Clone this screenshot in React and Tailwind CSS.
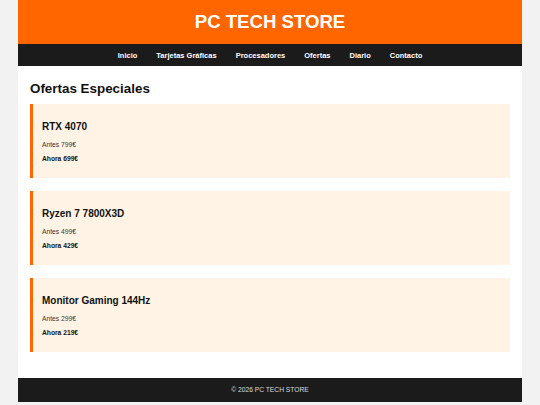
const links = ['Inicio', 'Tarjetas Gráficas', 'Procesadores', 'Ofertas', 'Diario', 'Contacto']

const offers = [
  { name: 'RTX 4070', before: '799€', now: '699€' },
  { name: 'Ryzen 7 7800X3D', before: '499€', now: '429€' },
  { name: 'Monitor Gaming 144Hz', before: '299€', now: '219€' },
]

function OfferCard({ name, before, now }) {
  return (
    <div className="bg-[#fff3e6] border-l-[3px] border-[#ff6600] pl-[9px] pt-[17px] pb-[15px]">
      <h3 className="text-[10px] leading-[12px] font-bold text-[#111]">{name}</h3>
      <p className="mt-[8px] text-[6.7px] leading-[8px] text-[#333]">Antes {before}</p>
      <p className="mt-[6px] text-[6.7px] leading-[8px] font-bold text-[#111]">Ahora {now}</p>
    </div>
  )
}

export default function App() {
  return (
    <div className="min-h-[405px] bg-[#f2f2f2] font-['Liberation_Sans',Arial,sans-serif]">
      <div className="w-[504px] mx-auto bg-white">
        {/* header */}
        <header className="h-[44px] bg-[#ff6600] flex items-center justify-center">
          <h1 className="text-[18.6px] leading-[22px] font-bold text-white">PC TECH STORE</h1>
        </header>

        {/* nav */}
        <nav className="h-[22px] bg-[#1b1b1b] flex items-center justify-center gap-[19px]">
          {links.map((l) => (
            <a key={l} href="#" className="text-[7.5px] leading-[9px] font-bold text-white">
              {l}
            </a>
          ))}
        </nav>

        {/* main */}
        <main className="px-[12px] pt-[14.5px] pb-[26px]">
          <h2 className="text-[13.4px] leading-[16px] font-bold text-[#111]">Ofertas Especiales</h2>
          <div className="mt-[7.5px] flex flex-col gap-[13px]">
            {offers.map((o) => (
              <OfferCard key={o.name} {...o} />
            ))}
          </div>
        </main>

        {/* footer */}
        <footer className="h-[24px] bg-[#1b1b1b] flex items-center justify-center">
          <p className="text-[6.7px] leading-[8px] text-[#dddddd]">© 2026 PC TECH STORE</p>
        </footer>
      </div>
    </div>
  )
}
